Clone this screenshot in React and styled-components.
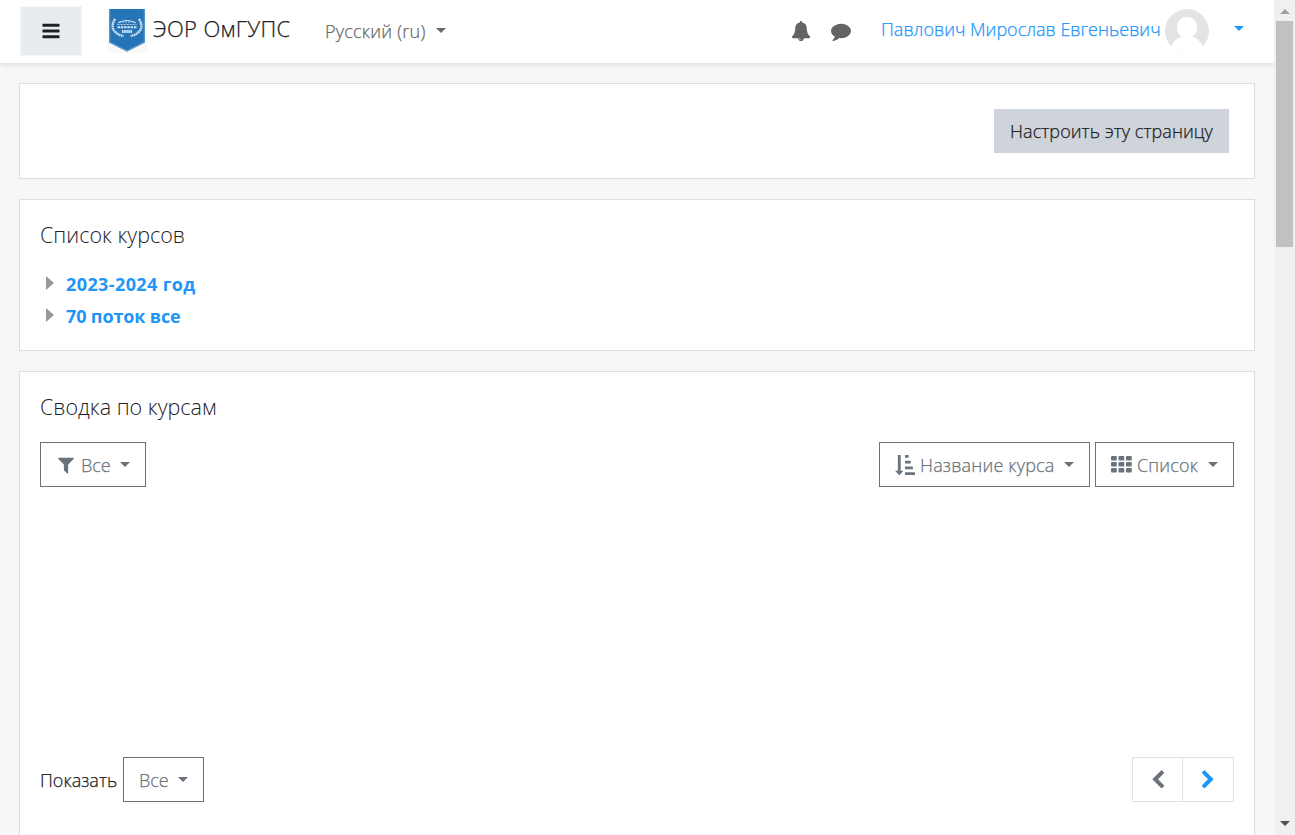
import React from "react";
import styled, { createGlobalStyle } from "styled-components";

const Global = createGlobalStyle`
  *, *::before, *::after { box-sizing: border-box; }
  html, body { margin: 0; height: 100%; overflow: hidden; }
  body {
    background: #f7f7f7;
    color: #1d2125;
    font: 400 18px/28px "Open Sans", "Noto Sans", sans-serif;
  }
`;

const Screen = styled.div`
  display: flex;
  width: 1295px;
  height: 835px;
  overflow: hidden;
`;

const Page = styled.div`
  flex: 1;
  min-width: 0;
  display: flex;
  flex-direction: column;
`;

const Navbar = styled.header`
  flex: none;
  display: flex;
  align-items: center;
  height: 63px;
  padding: 0 20px 2px;
  background: #fff;
  box-shadow: 0 2px 5px rgba(0, 0, 0, 0.1);
`;

const MenuButton = styled.button`
  display: flex;
  align-items: center;
  justify-content: center;
  width: 62px;
  height: 50px;
  margin-right: 25px;
  padding: 0;
  border: 1px solid #f4f6f7;
  background: #e9ecef;
  color: #1d2125;
`;

const Brand = styled.a`
  display: flex;
  align-items: center;
  width: 218px;
`;

const Label = styled.span`
  display: inline-block;
  white-space: nowrap;
  font-size: ${(p) => p.$size || 18}px;
  letter-spacing: ${(p) => p.$track || 0}px;
  font-weight: ${(p) => p.$weight || 300};
  -webkit-text-stroke: ${(p) => (p.$weight ? 0 : 0.25)}px currentColor;
`;

const BrandName = styled(Label)`
  margin: -5px 0 0 6px;
`;

const Caret = styled.span`
  flex: none;
  width: 0;
  height: 0;
  border: 5.4px solid transparent;
  border-top-color: currentColor;
  border-bottom: 0;
`;

const Language = styled.div`
  display: flex;
  align-items: center;
  justify-content: space-between;
  width: 121px;
  color: #6a6a6a;
`;

const Actions = styled.div`
  display: flex;
  align-items: center;
  gap: 20px;
  margin-left: auto;
  color: #646464;
`;

const User = styled.div`
  display: flex;
  align-items: center;
  width: 373px;
  margin-left: 30px;
  color: #2196f8;

  ${Caret} { margin: -4px 0 0 25px; }
`;

const UserName = styled(Label)`
  width: 284px;
  margin-top: -3px;
`;

const Main = styled.main`
  display: flex;
  flex-direction: column;
  gap: 20px;
  padding: 20px 19px 0;
`;

const Card = styled.section`
  flex: none;
  height: ${(p) => p.$height}px;
  padding: 20px;
  border: 1px solid #dedede;
  background: #fff;
`;

const CardHeader = styled(Card)`
  display: flex;
  align-items: center;
  justify-content: flex-end;
  padding-right: 25px;
`;

const CustomizeButton = styled.button`
  width: 235px;
  height: 44px;
  padding: 0;
  border: 0;
  background: #ced4da;
  color: #1d2125;
  font: inherit;
`;

const Title = styled.h5`
  height: 32px;
  margin: 0 0 16px;
  line-height: 29px;
  font-weight: 300;
`;

const CourseRow = styled.div`
  display: flex;
  align-items: center;
  height: 32px;
  padding-left: 6px;
  color: #2196f8;
`;

const Expander = styled.span`
  width: 0;
  height: 0;
  margin: -3px 12px 0 0;
  border: 7.5px solid transparent;
  border-left: 8px solid #999;
  border-right: 0;
`;

const Toolbar = styled.div`
  display: flex;
  gap: 5px;
  height: 45px;
  margin: 18px 0 ${(p) => p.$gap || 0}px;
`;

const Spacer = styled.span`
  flex: 1;
`;

const Dropdown = styled.button`
  display: flex;
  align-items: center;
  width: ${(p) => p.$width}px;
  height: 45px;
  padding: 0 15px;
  border: 1px solid #6a737b;
  background: #fff;
  color: #6a737b;
  font: inherit;

  svg { margin-right: 5px; }
  ${Caret} { margin: -1px 0 0 auto; }
`;

const Footer = styled.div`
  display: flex;
  align-items: center;
  height: 45px;
`;

const ShowLabel = styled(Label)`
  width: 83px;
`;

const Pager = styled.nav`
  display: flex;
  margin-left: auto;
`;

const PageButton = styled.button`
  display: flex;
  align-items: center;
  justify-content: center;
  width: ${(p) => p.$width}px;
  height: 45px;
  padding: 0;
  border: 1px solid #dee2e6;
  border-left-width: ${(p) => (p.$joined ? 0 : 1)}px;
  background: #fff;
  color: ${(p) => p.$color};
`;

const Scrollbar = styled.aside`
  display: flex;
  flex-direction: column;
  align-items: center;
  justify-content: space-between;
  width: 21px;
  background: #f0f0f0;
`;

const Thumb = styled.div`
  width: 17px;
  height: 226px;
  margin: 7px 2px auto 2px;
  background: #c1c1c1;
`;

const ArrowUp = styled.span`
  margin-top: 9px;
  border: 5px solid transparent;
  border-bottom-color: #a0a0a0;
  border-top: 0;
`;

const ArrowDown = styled.span`
  margin-bottom: 9px;
  border: 5px solid transparent;
  border-top-color: #505050;
  border-bottom: 0;
`;

const Svg = styled.svg`
  flex: none;
  display: block;
  fill: currentColor;
`;

const PATHS = {
  bars: "M1664 1344v128q0 26-19 45t-45 19h-1408q-26 0-45-19t-19-45v-128q0-26 19-45t45-19h1408q26 0 45 19t19 45zm0-512v128q0 26-19 45t-45 19h-1408q-26 0-45-19t-19-45v-128q0-26 19-45t45-19h1408q26 0 45 19t19 45zm0-512v128q0 26-19 45t-45 19h-1408q-26 0-45-19t-19-45v-128q0-26 19-45t45-19h1408q26 0 45 19t19 45z",
  bell: "M912 1696q0-16-16-16-59 0-101.5-42.5t-42.5-101.5q0-16-16-16t-16 16q0 73 51.5 124.5t124.5 51.5q16 0 16-16zm816-288q0 52-38 90t-90 38h-448q0 106-75 181t-181 75-181-75-75-181h-448q-52 0-90-38t-38-90q50-42 91-88t85-119.5 74.5-158.5 50-206 19.5-260q0-152 117-282.5t307-158.5q-8-19-8-39 0-40 28-68t68-28 68 28 28 68q0 20-8 39 190 28 307 158.5t117 282.5q0 139 19.5 260t50 206 74.5 158.5 85 119.5 91 88z",
  comment: "M1792 896q0 174-120 321.5t-326 233-450 85.5q-70 0-145-8-198 175-460 242-49 14-114 22-17 2-30.5-9t-17.5-29v-1q-3-4-.5-12t2-10 4.5-9.5l6-9 7-8.5 8-9q7-8 31-34.5t34.5-38 31-39.5 32.5-51 27-59 26-76q-157-89-247.5-220t-90.5-281q0-130 71-248.5t191-204.5 286-136.5 348-50.5q244 0 450 85.5t326 233 120 321.5z",
  filter: "M1595 295q17 41-14 70l-493 493v742q0 42-39 59-13 5-25 5-27 0-45-19l-256-256q-19-19-19-45v-486l-493-493q-31-29-14-70 17-39 59-39h1280q42 0 59 39z",
  sort: "M736 1440q0 12-10 24l-319 319q-10 9-23 9-12 0-23-9l-320-320q-15-16-7-35 8-20 30-20h192v-1376q0-14 9-23t23-9h192q14 0 23 9t9 23v1376h192q14 0 23 9t9 23zm1056 128v192q0 14-9 23t-23 9h-832q-14 0-23-9t-9-23v-192q0-14 9-23t23-9h832q14 0 23 9t9 23zm-192-512v192q0 14-9 23t-23 9h-640q-14 0-23-9t-9-23v-192q0-14 9-23t23-9h640q14 0 23 9t9 23zm-192-512v192q0 14-9 23t-23 9h-448q-14 0-23-9t-9-23v-192q0-14 9-23t23-9h448q14 0 23 9t9 23zm-192-512v192q0 14-9 23t-23 9h-256q-14 0-23-9t-9-23v-192q0-14 9-23t23-9h256q14 0 23 9t9 23z",
  left: "M1427 301l-531 531 531 531q19 19 19 45t-19 45l-166 166q-19 19-45 19t-45-19l-742-742q-19-19-19-45t19-45l742-742q19-19 45-19t45 19l166 166q19 19 19 45t-19 45z",
  right: "M1363 877l-742 742q-19 19-45 19t-45-19l-166-166q-19-19-19-45t19-45l531-531-531-531q-19-19-19-45t19-45l166-166q19-19 45-19t45 19l742 742q19 19 19 45t-19 45z",
};

const Icon = ({ name, size = 20 }) => (
  <Svg width={size} height={size} viewBox="0 0 1792 1792">
    <path d={PATHS[name]} />
  </Svg>
);

const GridIcon = () => (
  <Svg width="21" height="20" viewBox="0 0 21 20">
    {[1.5, 7.5, 13.5].map((y) =>
      [0, 7.5, 15].map((x) => (
        <rect key={`${x}-${y}`} x={x} y={y - 0.5} width="5.8" height="4.6" rx="1" />
      ))
    )}
  </Svg>
);

const Logo = () => (
  <Svg width="40" height="44" viewBox="0 0 40 44">
    <path d="M0 0h40v44H0z" fill="#f9f9f8" />
    <path d="M2 0h36v33.5L20 42.5 2 33.5z" fill="#2474b7" />
    <path d="M2.7 0v33L20 41.8 37.3 33V0" fill="none" stroke="#5c9acd" strokeWidth="1.2" />
    <g fill="none" stroke="#d3e4f2">
      <path d="M8 10q-5.500 9 1.500 14 3 2.500 7 3M32 10q5.500 9-1.500 14-3 2.500-7 3" strokeWidth="2.400" strokeDasharray="1.800 .5" />
      <path d="M11 14q9-5 18 0" strokeWidth="1" />
      <path d="M12 13h16M10.500 15.500h19" strokeWidth="1" strokeDasharray="2 1" opacity=".8" />
      <path d="M10.500 18.300h19" strokeWidth="2" strokeDasharray="2.500 .8" />
      <path d="M15 22.500h10.500" strokeWidth="2.800" strokeDasharray="1.600 .5" />
    </g>
  </Svg>
);

const Avatar = () => (
  <Svg width="44" height="44" viewBox="0 0 44 44">
    <defs>
      <clipPath id="avatar">
        <circle cx="22" cy="22" r="22" />
      </clipPath>
    </defs>
    <g clipPath="url(#avatar)">
      <path d="M0 0h44v44H0z" fill="#e4e4e4" />
      <path d="M22 8c6.500 0 10 4.300 10 10.500 0 4.500-2 7.500-5 9.200 5.500 1.300 9.500 5 11.500 12.300V46h-33v-6c2-7.300 6-11 11.500-12.300-3-1.700-5-4.700-5-9.200C12 12.300 15.500 8 22 8z" fill="#fff" />
    </g>
  </Svg>
);

export default function App() {
  return (
    <Screen>
      <Global />
      <Page>
        <Navbar>
          <MenuButton aria-label="Меню"><Icon name="bars" size={20} /></MenuButton>
          <Brand>
            <Logo />
            <BrandName $size={22} $track={0.35}>ЭОР ОмГУПС</BrandName>
          </Brand>
          <Language>
            <Label $track={0.22}>Русский (ru)</Label>
            <Caret />
          </Language>
          <Actions>
            <Icon name="bell" />
            <Icon name="comment" />
          </Actions>
          <User>
            <UserName>Павлович Мирослав Евгеньевич</UserName>
            <Avatar />
            <Caret />
          </User>
        </Navbar>
        <Main>
          <CardHeader $height={96}>
            <CustomizeButton><Label $track={0.06}>Настроить эту страницу</Label></CustomizeButton>
          </CardHeader>
          <Card $height={152}>
            <Title><Label $size={21.5} $weight={300}>Список курсов</Label></Title>
            <CourseRow><Expander /><Label $weight={700} $track={0.4}>2023-2024 год</Label></CourseRow>
            <CourseRow><Expander /><Label $weight={700} $track={-0.15}>70 поток все</Label></CourseRow>
          </Card>
          <Card $height={500}>
            <Title><Label $size={21.5} $weight={300}>Сводка по курсам</Label></Title>
            <Toolbar $gap={270}>
              <Dropdown $width={106}><Icon name="filter" /><Label>Все</Label><Caret /></Dropdown>
              <Spacer />
              <Dropdown $width={211}><Icon name="sort" /><Label $track={0.18}>Название курса</Label><Caret /></Dropdown>
              <Dropdown $width={139}><GridIcon /><Label $track={0.18}>Список</Label><Caret /></Dropdown>
            </Toolbar>
            <Footer>
              <ShowLabel>Показать</ShowLabel>
              <Dropdown $width={81}><Label>Все</Label><Caret /></Dropdown>
              <Pager>
                <PageButton $width={51} $color="#6a737b"><Icon name="left" /></PageButton>
                <PageButton $width={51} $color="#2196f8" $joined><Icon name="right" /></PageButton>
              </Pager>
            </Footer>
          </Card>
        </Main>
      </Page>
      <Scrollbar>
        <ArrowUp />
        <Thumb />
        <ArrowDown />
      </Scrollbar>
    </Screen>
  );
}
